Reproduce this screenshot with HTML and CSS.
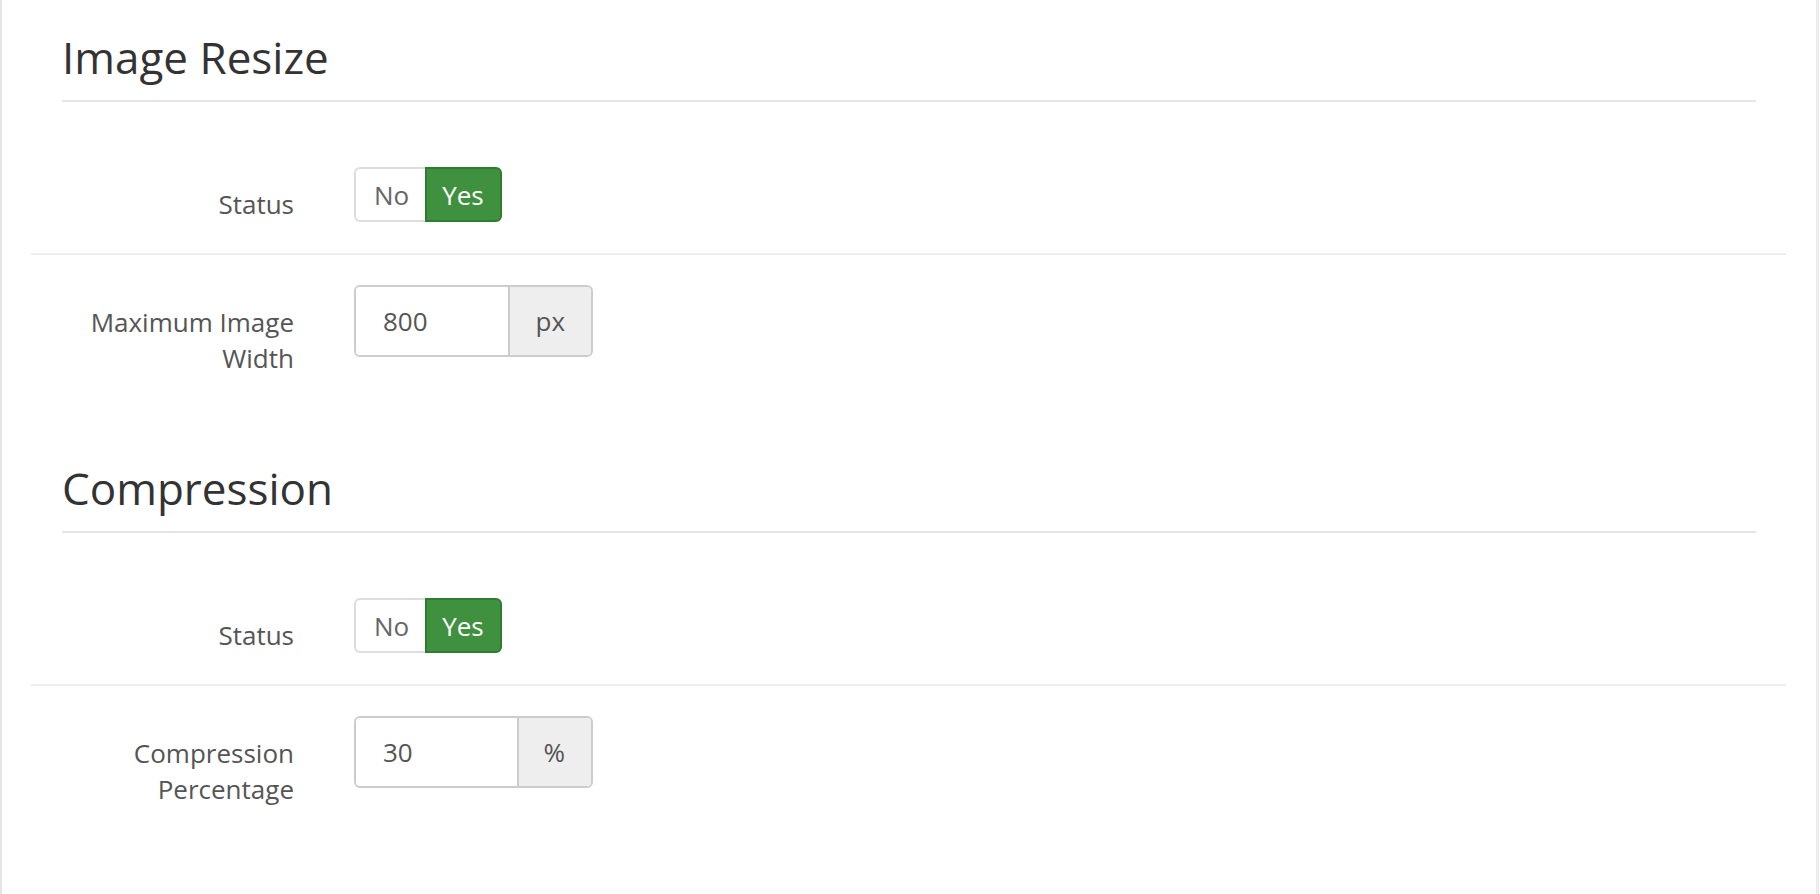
FILE: index.html
```html
<!DOCTYPE html>
<html lang="en">
<head>
<meta charset="utf-8">
<title>Image Settings</title>
<link rel="stylesheet" href="styles.css">
</head>
<body>
<div class="panel">
  <section class="section">
    <h2 class="section-title">Image Resize</h2>
    <div class="form-row">
      <label class="form-label">Status</label>
      <div class="control">
        <div class="toggle">
          <span class="toggle-btn toggle-no">No</span>
          <span class="toggle-btn toggle-yes">Yes</span>
        </div>
      </div>
    </div>
    <div class="form-row">
      <label class="form-label">Maximum Image Width</label>
      <div class="control">
        <div class="input-group">
          <input class="input-field" type="text" value="800">
          <span class="addon">px</span>
        </div>
      </div>
    </div>
  </section>
  <section class="section">
    <h2 class="section-title">Compression</h2>
    <div class="form-row">
      <label class="form-label">Status</label>
      <div class="control">
        <div class="toggle">
          <span class="toggle-btn toggle-no">No</span>
          <span class="toggle-btn toggle-yes">Yes</span>
        </div>
      </div>
    </div>
    <div class="form-row">
      <label class="form-label">Compression Percentage</label>
      <div class="control">
        <div class="input-group">
          <input class="input-field" type="text" value="30">
          <span class="addon">%</span>
        </div>
      </div>
    </div>
  </section>
</div>
</body>
</html>
```

FILE: styles.css
```css
html, body {
  margin: 0;
  padding: 0;
  background: #ffffff;
}

body {
  font-family: "Open Sans", "Liberation Sans", sans-serif;
  color: #555555;
}

.panel {
  box-sizing: border-box;
  width: 1819px;
  min-height: 894px;
  border-left: 2px solid #e4e4e4;
  border-right: 3px solid #ececec;
  padding-top: 32px;
}

.section {
  margin-bottom: 56px;
}

.section-title {
  margin: 0 60px 34px 60px;
  padding: 0 0 18px 0;
  font-size: 44px;
  line-height: 50px;
  font-weight: 400;
  color: #333333;
  border-bottom: 2px solid #e5e5e5;
}

.form-row {
  display: grid;
  grid-template-columns: 263px auto;
  column-gap: 60px;
  align-items: start;
  margin: 0 30px 0 29px;
  padding: 31px 0;
  border-bottom: 2px solid #eeeeee;
}

.form-row + .form-row {
  padding-top: 30px;
}

.form-row:last-child {
  border-bottom: none;
}

.form-label {
  padding-top: 19px;
  font-size: 26px;
  line-height: 36px;
  text-align: right;
  color: #555555;
}

.control {
  display: flex;
}

.toggle {
  display: flex;
  height: 55px;
}

.toggle-btn {
  box-sizing: border-box;
  display: flex;
  align-items: center;
  height: 55px;
  font-size: 26px;
}

.toggle-no {
  padding: 0 16px 0 18px;
  color: #666666;
  background: #ffffff;
  border: 2px solid #dddddd;
  border-right: none;
  border-radius: 6px 0 0 6px;
}

.toggle-yes {
  padding: 0 16px 0 15px;
  color: #ffffff;
  background: #3f913f;
  border: 2px solid #2f7c30;
  border-radius: 0 6px 6px 0;
}

.input-group {
  box-sizing: border-box;
  display: flex;
  width: 239px;
  height: 72px;
  border: 2px solid #cccccc;
  border-radius: 6px;
  overflow: hidden;
}

.input-field {
  flex: 1;
  min-width: 0;
  margin: 0;
  padding: 0 0 0 27px;
  border: none;
  outline: none;
  background: #ffffff;
  font-family: inherit;
  font-size: 26px;
  color: #555555;
}

.addon {
  display: flex;
  align-items: center;
  padding: 0 26px 0 25px;
  background: #eeeeee;
  border-left: 2px solid #cccccc;
  font-size: 26px;
  color: #555555;
}
```
